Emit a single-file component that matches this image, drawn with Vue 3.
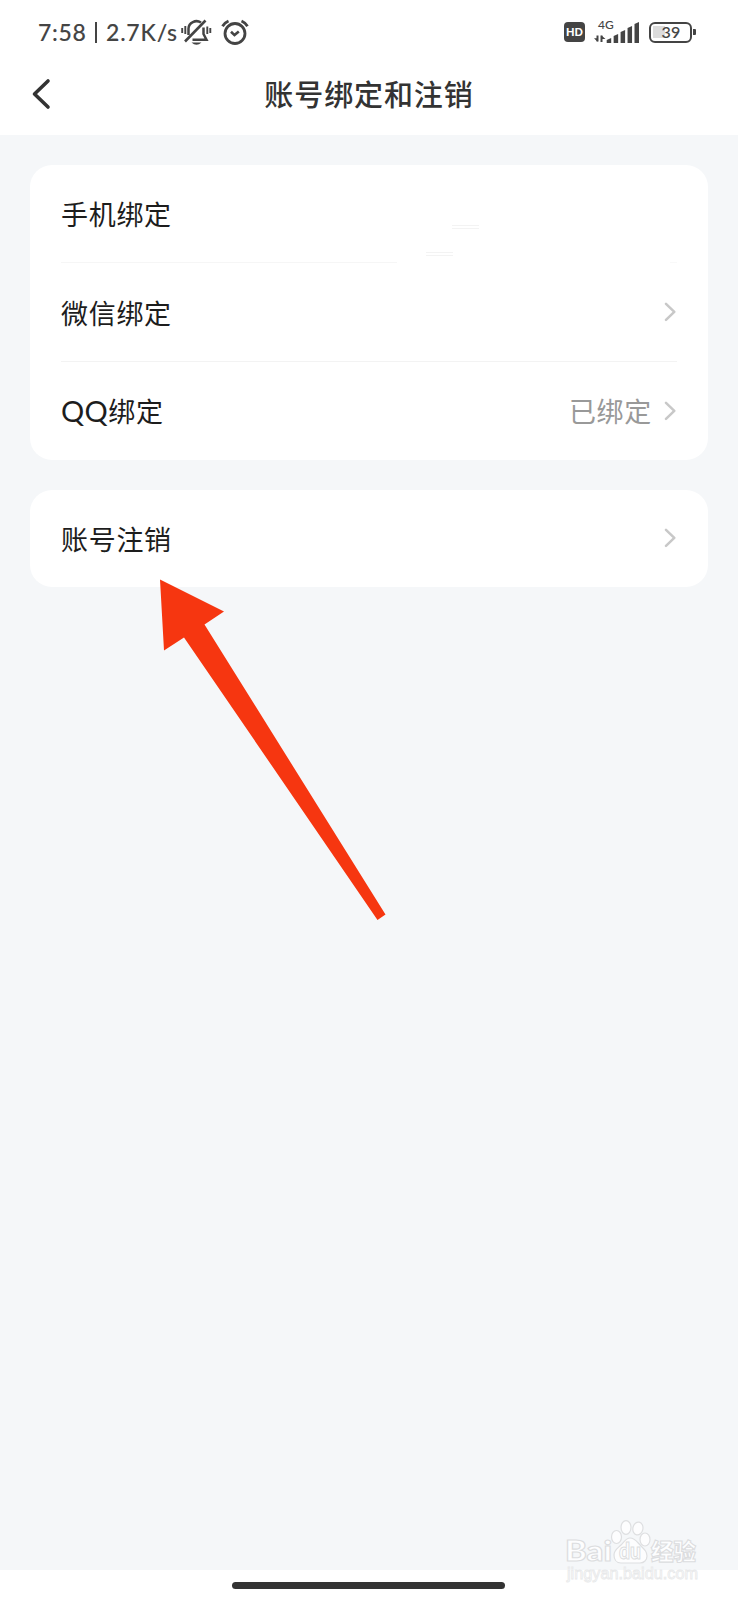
<script setup>
import { ref } from 'vue'

const groups = ref([
  [
    { label: '手机绑定', value: '', arrow: false, cut: true },
    { label: '微信绑定', value: '', arrow: true },
    { latin: 'QQ', label: '绑定', value: '已绑定', arrow: true }
  ],
  [{ label: '账号注销', value: '', arrow: true }]
])

// signal strength bars, left to right
const bars = [5, 9, 13, 17, 21]
</script>

<template>
  <div class="screen">
    <header>
      <div class="status">
        <span class="clock">7:58</span>
        <span class="bar"></span>
        <span class="speed">2.7K/s</span>
        <svg class="mute" width="32" height="28" viewBox="0 0 32 28" fill="none" stroke="#444" stroke-width="2.5">
          <path d="M7.500 17V10.500a8 7.500 0 0 1 12.500-6M22.500 9.500v6.500l3 5.700H11.500" />
          <path d="M4 23.500L24.500 2.500" stroke-width="2.600" />
          <path d="M1.200 10v5M4.300 8v8M26.300 8.500v7.500M29.300 10v5" stroke-width="1.900" />
          <path d="M10.500 24.500h10q-5 4.500-10 0z" fill="#444" stroke="none" />
        </svg>
        <svg class="alarm" width="28" height="26" viewBox="0 0 28 26" fill="none" stroke="#444" stroke-width="2.8">
          <circle cx="14" cy="14.500" r="10" />
          <path d="M1.500 7.200q2-3.500 6-5.200M26.500 7.200q-2-3.500-6-5.200" />
          <path d="M10 12.800l3.500 3.300 4.300-3.600" stroke-width="2.600" />
        </svg>
        <span class="hd">HD</span>
        <div class="signal">
          <span class="net">4G</span>
          <svg width="46" height="22" viewBox="0 0 46 22">
            <path d="M3.500 14.500v6M7.500 21v-6.500" stroke="#444" stroke-width="2" />
            <path d="M0 17.300h3.500v3.500zM7.500 14.500l4 3.500h-4z" fill="#444" />
            <path
              v-for="(h, i) in bars" :key="i"
              :d="`M${12.700 + i * 6.950} 22v${2 - h}l4.500-2v${h}z`" fill="#444"
            />
          </svg>
        </div>
        <div class="battery"><span class="level"></span><span class="percent">39</span></div>
        <span class="tip"></span>
      </div>
      <nav>
        <svg class="back" width="20" height="32" viewBox="0 0 20 32" fill="none" stroke="#333" stroke-width="3.600" stroke-linecap="round" stroke-linejoin="round">
          <path d="M17 3L3.500 16 17 29" />
        </svg>
        <h1>账号绑定和注销</h1>
      </nav>
    </header>

    <main>
      <section v-for="(rows, g) in groups" :key="g" class="card">
        <div v-for="row in rows" :key="row.label" class="row" :class="{ cut: row.cut }">
          <span class="label"><b v-if="row.latin">{{ row.latin }}</b>{{ row.label }}</span>
          <span class="value">{{ row.value }}</span>
          <svg v-if="row.arrow" class="chevron" width="12" height="20" viewBox="0 0 12 20" fill="none" stroke="#c8c8c8" stroke-width="2.500" stroke-linecap="round" stroke-linejoin="round">
            <path d="M2 1.800l8.300 8-8.300 8" />
          </svg>
        </div>
      </section>
    </main>

    <footer><span class="home"></span></footer>

    <!-- faint leftovers of the erased phone number -->
    <i class="smudge one"></i>
    <i class="smudge two"></i>

    <svg class="pointer" width="230" height="345" viewBox="0 0 230 345">
      <path d="M0 0.500L64 32.500 44.500 45.500 225.500 335.500 217.500 341 24 58.500 4 71.500z" fill="#f63610" />
    </svg>

    <svg class="watermark" width="142" height="70" viewBox="0 0 142 70">
      <g fill="#fdfdfe" stroke="#dedfe1" stroke-width="1.200">
        <ellipse cx="51.500" cy="21" rx="5" ry="6.500" />
        <ellipse cx="61" cy="11.500" rx="5" ry="6.800" />
        <ellipse cx="73" cy="12.500" rx="5" ry="6.500" transform="rotate(12 73 12)" />
        <ellipse cx="80" cy="23.500" rx="5" ry="6.500" />
        <path d="M65 22c5 0 7 4 11 8s6 6 6 10-3 7-7 7H56c-5 0-7-4-7-8 0-5 4-7 7-10s5-7 9-7z" />
      </g>
      <g class="brand">
        <text x="0" y="45" textLength="47" lengthAdjust="spacingAndGlyphs">Bai</text>
        <text class="du" x="54" y="43" textLength="22" lengthAdjust="spacingAndGlyphs">du</text>
        <text class="cn" x="86" y="44" textLength="45" lengthAdjust="spacingAndGlyphs">经验</text>
      </g>
      <text class="url" x="2" y="63" textLength="131" lengthAdjust="spacingAndGlyphs">jingyan.baidu.com</text>
    </svg>
  </div>
</template>

<style>
body { margin: 0; }
</style>

<style scoped>
.screen {
  position: relative;
  width: 738px;
  height: 1600px;
  display: flex;
  flex-direction: column;
  overflow: hidden;
  background: #f5f7f9;
  font-family: Lato, "Noto Sans CJK SC", sans-serif;
}
header { height: 135px; background: #fff; }
.status {
  display: flex;
  align-items: center;
  height: 64px;
  padding-left: 38px;
  color: #444;
  font-size: 23px;
  font-weight: 500;
  white-space: nowrap;
  -webkit-text-stroke: 0.1px #444;
}
.clock { width: 57px; letter-spacing: 0.7px; }
.bar { width: 2px; height: 21px; margin-right: 9px; background: #444; }
.speed { width: 75px; letter-spacing: 0.8px; }
.mute { flex: none; }
.alarm { flex: none; margin-left: 8px; }
.hd {
  width: 21px;
  height: 20px;
  margin-left: 315px;
  border-radius: 4px;
  background: #444;
  color: #fff;
  font: 900 11px/20px Lato, sans-serif;
  text-align: center;
  -webkit-text-stroke: 0;
}
.signal { position: relative; width: 46px; height: 22px; margin-left: 9px; }
.signal svg { display: block; }
.net { position: absolute; left: 4px; top: -3px; font: 500 12px/14px Lato, sans-serif; -webkit-text-stroke: 0; }
.battery {
  position: relative;
  box-sizing: border-box;
  width: 43px;
  height: 21px;
  margin-left: 9px;
  border: 2.5px solid #444;
  border-radius: 6px;
  text-align: center;
}
.level { position: absolute; left: 2px; top: 2px; width: 12px; height: 12px; background: #dcdcdc; }
.percent { position: relative; display: block; font: 500 16px/16px Lato, sans-serif; letter-spacing: 0.3px; padding-left: 1px; }
.tip { width: 2.5px; height: 6px; margin-left: 1px; background: #444; border-radius: 0 1px 1px 0; }

nav { display: flex; align-items: center; height: 60px; padding-left: 31px; }
.back { flex: none; }
h1 {
  flex: 1;
  margin: -3px 51px 0 0;
  color: #333;
  font: 500 29px/44px "Noto Sans CJK SC", sans-serif;
  letter-spacing: 0.9px;
  text-align: center;
}

main { flex: 1; display: flex; flex-direction: column; gap: 30px; padding: 30px 30px 0; }
.card { padding: 0 31px; border-radius: 22px; background: #fff; }
.row { display: flex; align-items: center; height: 97.5px; }
.row.cut { height: 97px; }
.row + .row { border-top: 1px solid #f3f3f3; }
.row.cut + .row {
  height: 98px;
  border-top: 0;
  padding-top: 1px;
  background: linear-gradient(to right, #f6f6f6 336px, transparent 336px 609px, #f9f9f9 609px) top / 100% 1px no-repeat;
}
.label { flex: 1; color: #1d1d1d; font-size: 27px; letter-spacing: 0.7px; }
.label b { font-weight: 400; font-size: 29px; letter-spacing: 0.4px; }
.value { color: #999; font-size: 27px; letter-spacing: 0.7px; }
.chevron { margin: 0 1px 0 12px; }

footer { display: flex; justify-content: center; height: 30px; background: #fff; }
.home { width: 273px; height: 7px; margin: 11.5px 2px 0 0; border-radius: 4px; background: #333; }

.smudge { position: absolute; width: 27px; height: 2px; border: solid #f3f3f3; border-width: 1px 0; }
.one { left: 452px; top: 225px; }
.two { left: 426px; top: 252px; }
.pointer { position: absolute; left: 160px; top: 579px; }
.watermark { position: absolute; left: 565px; top: 1516px; }
.brand { fill: #fdfdfe; stroke: #dcdddf; stroke-width: 1.1px; font: 900 29px Lato, sans-serif; }
.du { font-size: 23px; }
.cn { font: 900 23px "Noto Sans CJK SC", sans-serif; }
.url { fill: #fdfdfd; stroke: #e8e9ea; stroke-width: 0.8px; font: 500 16px "Liberation Sans", sans-serif; }
</style>
